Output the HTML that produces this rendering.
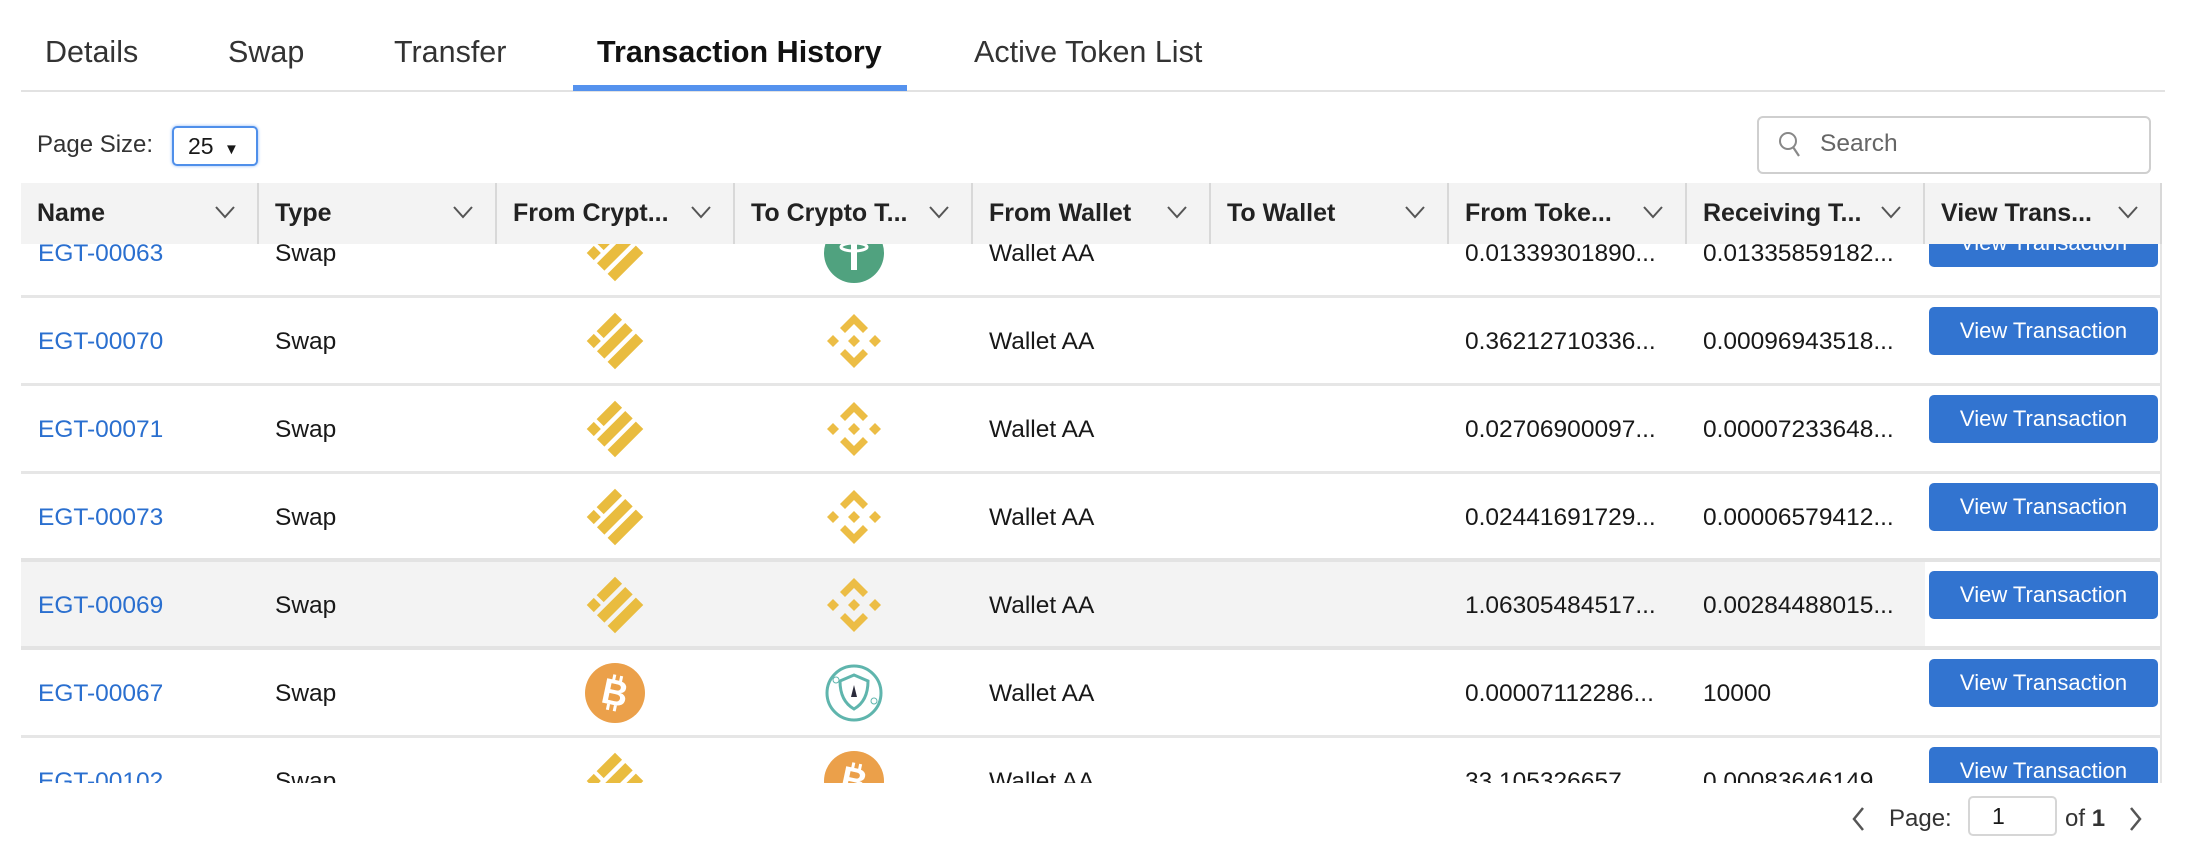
<!DOCTYPE html>
<html><head><meta charset="utf-8"><style>
*{box-sizing:border-box;margin:0;padding:0}
body{width:2190px;height:864px;background:#fff;font-family:"Liberation Sans",sans-serif;color:#181818;position:relative;overflow:hidden}
.a{position:absolute;white-space:nowrap}
.tab{top:35px;font-size:30.5px;color:#333}
.hd{position:absolute;top:183px;left:21px;width:2141px;height:61px;background:#f3f3f3}
.hc{position:absolute;top:0;height:61px;border-right:2px solid #d8d8d8;font-weight:bold;font-size:25px;line-height:61px;padding-left:16px;color:#222}
.hc svg{position:absolute;right:22px;top:22px}
.body{position:absolute;top:244px;left:21px;width:2141px;height:539px;overflow:hidden;border-right:2px solid #e5e5e5}
.row{position:absolute;left:0;width:2141px;height:88px;border-bottom:3px solid #e6e6e6;font-size:24.5px}
.row .t{position:absolute;top:1px;line-height:85px}
.lnk{color:#2a6fcf}
.btn{position:absolute;left:1908px;top:9px;width:229px;height:48px;background:#3274d0;border-radius:5px;color:#fff;font-size:22px;text-align:center;line-height:48px}
.ic{position:absolute;top:13px}
</style></head><body>
<div class="a tab" style="left:45px">Details</div>
<div class="a tab" style="left:228px">Swap</div>
<div class="a tab" style="left:394px">Transfer</div>
<div class="a tab" style="left:597px;font-weight:bold;color:#111">Transaction History</div>
<div class="a tab" style="left:974px">Active Token List</div>
<div class="a" style="left:21px;top:90px;width:2144px;height:2px;background:#e2e2e2"></div>
<div class="a" style="left:573px;top:85px;width:334px;height:6px;background:#5592ee"></div>

<div class="a" style="left:37px;top:131px;font-size:24px;color:#333">Page Size:</div>
<div class="a" style="left:172px;top:126px;width:86px;height:40px;border:2px solid #4f8fea;border-radius:5px;box-shadow:0 0 3px #8fb8f5;font-size:23px;line-height:36px;padding-left:14px">25 <span style="font-size:15px;margin-left:4px">▼</span></div>
<div class="a" style="left:1757px;top:116px;width:394px;height:58px;border:2px solid #cfcfcf;border-radius:6px"></div>
<svg class="a" style="left:1778px;top:130px" width="24" height="30" viewBox="0 0 24 30"><circle cx="10" cy="11" r="8" fill="none" stroke="#888" stroke-width="2"/><path d="M15 17 L21 26" stroke="#888" stroke-width="2.2"/></svg>
<div class="a" style="left:1820px;top:130px;font-size:24.5px;color:#666">Search</div>

<div class="hd">
<div class="hc" style="left:0;width:238px">Name<svg width="20" height="14"><path d="M1 2 L10 12 L19 2" fill="none" stroke="#555" stroke-width="2"/></svg></div>
<div class="hc" style="left:238px;width:238px">Type<svg width="20" height="14"><path d="M1 2 L10 12 L19 2" fill="none" stroke="#555" stroke-width="2"/></svg></div>
<div class="hc" style="left:476px;width:238px">From Crypt...<svg width="20" height="14"><path d="M1 2 L10 12 L19 2" fill="none" stroke="#555" stroke-width="2"/></svg></div>
<div class="hc" style="left:714px;width:238px">To Crypto T...<svg width="20" height="14"><path d="M1 2 L10 12 L19 2" fill="none" stroke="#555" stroke-width="2"/></svg></div>
<div class="hc" style="left:952px;width:238px">From Wallet<svg width="20" height="14"><path d="M1 2 L10 12 L19 2" fill="none" stroke="#555" stroke-width="2"/></svg></div>
<div class="hc" style="left:1190px;width:238px">To Wallet<svg width="20" height="14"><path d="M1 2 L10 12 L19 2" fill="none" stroke="#555" stroke-width="2"/></svg></div>
<div class="hc" style="left:1428px;width:238px">From Toke...<svg width="20" height="14"><path d="M1 2 L10 12 L19 2" fill="none" stroke="#555" stroke-width="2"/></svg></div>
<div class="hc" style="left:1666px;width:238px">Receiving T...<svg width="20" height="14"><path d="M1 2 L10 12 L19 2" fill="none" stroke="#555" stroke-width="2"/></svg></div>
<div class="hc" style="left:1904px;width:237px">View Trans...<svg width="20" height="14"><path d="M1 2 L10 12 L19 2" fill="none" stroke="#555" stroke-width="2"/></svg></div>
</div>

<svg width="0" height="0" style="position:absolute">
<defs>
<g id="busd"><g transform="rotate(-45 30 30)" fill="#e9bc3f"><rect x="10" y="10" width="10" height="10"/><rect x="24" y="10" width="26" height="10"/><rect x="10" y="24.5" width="40" height="10.5"/><rect x="10" y="39.5" width="40" height="10.5"/></g></g>
<g id="bnb" fill="#ecbd45"><polygon points="30,3 44,17 39,22 30,13 21,22 16,17"/><polygon points="30,57 44,43 39,38 30,47 21,38 16,43"/><polygon points="3,30 9,24 15,30 9,36"/><polygon points="45,30 51,24 57,30 51,36"/><polygon points="30,24 36,30 30,36 24,30"/></g>
<g id="btc"><circle cx="30" cy="30" r="30" fill="#eba04a"/><text x="30" y="42" font-family="Liberation Sans" font-weight="bold" font-size="36" fill="#fff" text-anchor="middle" transform="rotate(12 30 30)">B</text><path d="M26 12v6M33 12v6M26 42v6M33 42v6" stroke="#fff" stroke-width="3" transform="rotate(12 30 30)"/></g>
<g id="usdt"><circle cx="30" cy="30" r="30" fill="#50a27f"/><rect x="17" y="11" width="26" height="6" fill="#fff"/><rect x="27" y="11" width="6" height="36" fill="#fff"/><ellipse cx="30" cy="24" rx="13" ry="4" fill="none" stroke="#fff" stroke-width="3"/></g>
<g id="safe"><circle cx="30" cy="30" r="27" fill="none" stroke="#5fb5ad" stroke-width="3"/><path d="M30 12 L44 18 Q44 38 30 46 Q16 38 16 18 Z" fill="none" stroke="#5fb5ad" stroke-width="3"/><path d="M30 22 L33 34 L27 34 Z" fill="#2b2b3b"/><circle cx="12" cy="17" r="3" fill="none" stroke="#5fb5ad"/><circle cx="50" cy="38" r="3" fill="none" stroke="#5fb5ad"/></g>
</defs></svg>

<div class="body">
<div class="row" style="top:-34px"><div class="t lnk" style="left:17px">EGT-00063</div><div class="t" style="left:254px">Swap</div><svg class="ic" style="left:564px" width="60" height="60"><use href="#busd"/></svg><svg class="ic" style="left:803px" width="60" height="60"><use href="#usdt"/></svg><div class="t" style="left:968px">Wallet AA</div><div class="t" style="left:1444px">0.01339301890...</div><div class="t" style="left:1682px">0.01335859182...</div><div class="btn">View Transaction</div></div>
<div class="row" style="top:54px"><div class="t lnk" style="left:17px">EGT-00070</div><div class="t" style="left:254px">Swap</div><svg class="ic" style="left:564px" width="60" height="60"><use href="#busd"/></svg><svg class="ic" style="left:803px" width="60" height="60"><use href="#bnb"/></svg><div class="t" style="left:968px">Wallet AA</div><div class="t" style="left:1444px">0.36212710336...</div><div class="t" style="left:1682px">0.00096943518...</div><div class="btn">View Transaction</div></div>
<div class="row" style="top:142px"><div class="t lnk" style="left:17px">EGT-00071</div><div class="t" style="left:254px">Swap</div><svg class="ic" style="left:564px" width="60" height="60"><use href="#busd"/></svg><svg class="ic" style="left:803px" width="60" height="60"><use href="#bnb"/></svg><div class="t" style="left:968px">Wallet AA</div><div class="t" style="left:1444px">0.02706900097...</div><div class="t" style="left:1682px">0.00007233648...</div><div class="btn">View Transaction</div></div>
<div class="row" style="top:230px;border-bottom:4px solid #e3e3e3"><div class="t lnk" style="left:17px">EGT-00073</div><div class="t" style="left:254px">Swap</div><svg class="ic" style="left:564px" width="60" height="60"><use href="#busd"/></svg><svg class="ic" style="left:803px" width="60" height="60"><use href="#bnb"/></svg><div class="t" style="left:968px">Wallet AA</div><div class="t" style="left:1444px">0.02441691729...</div><div class="t" style="left:1682px">0.00006579412...</div><div class="btn">View Transaction</div></div>
<div class="row" style="top:318px;background:#f3f3f3;border-bottom:4px solid #e3e3e3"><div class="t lnk" style="left:17px">EGT-00069</div><div class="t" style="left:254px">Swap</div><svg class="ic" style="left:564px" width="60" height="60"><use href="#busd"/></svg><svg class="ic" style="left:803px" width="60" height="60"><use href="#bnb"/></svg><div class="t" style="left:968px">Wallet AA</div><div class="t" style="left:1444px">1.06305484517...</div><div class="t" style="left:1682px">0.00284488015...</div><div style="position:absolute;left:1904px;top:0;width:237px;height:84px;background:#fff"></div><div class="btn">View Transaction</div></div>
<div class="row" style="top:406px"><div class="t lnk" style="left:17px">EGT-00067</div><div class="t" style="left:254px">Swap</div><svg class="ic" style="left:564px" width="60" height="60"><use href="#btc"/></svg><svg class="ic" style="left:803px" width="60" height="60"><use href="#safe"/></svg><div class="t" style="left:968px">Wallet AA</div><div class="t" style="left:1444px">0.00007112286...</div><div class="t" style="left:1682px">10000</div><div class="btn">View Transaction</div></div>
<div class="row" style="top:494px"><div class="t lnk" style="left:17px">EGT-00102</div><div class="t" style="left:254px">Swap</div><svg class="ic" style="left:564px" width="60" height="60"><use href="#busd"/></svg><svg class="ic" style="left:803px" width="60" height="60"><use href="#btc"/></svg><div class="t" style="left:968px">Wallet AA</div><div class="t" style="left:1444px">33.105326657...</div><div class="t" style="left:1682px">0.00083646149...</div><div class="btn">View Transaction</div></div>
</div>

<svg class="a" style="left:1850px;top:806px" width="16" height="26"><path d="M13 2 L4 13 L13 24" fill="none" stroke="#555" stroke-width="2.5"/></svg>
<div class="a" style="left:1889px;top:805px;font-size:24px;color:#333">Page:</div>
<div class="a" style="left:1968px;top:796px;width:89px;height:40px;border:2px solid #d6d6d6;border-radius:5px;font-size:23px;line-height:36px;padding-left:22px">1</div>
<div class="a" style="left:2065px;top:805px;font-size:24px;color:#333">of <b>1</b></div>
<svg class="a" style="left:2128px;top:806px" width="16" height="26"><path d="M3 2 L12 13 L3 24" fill="none" stroke="#555" stroke-width="2.5"/></svg>
</body></html>
